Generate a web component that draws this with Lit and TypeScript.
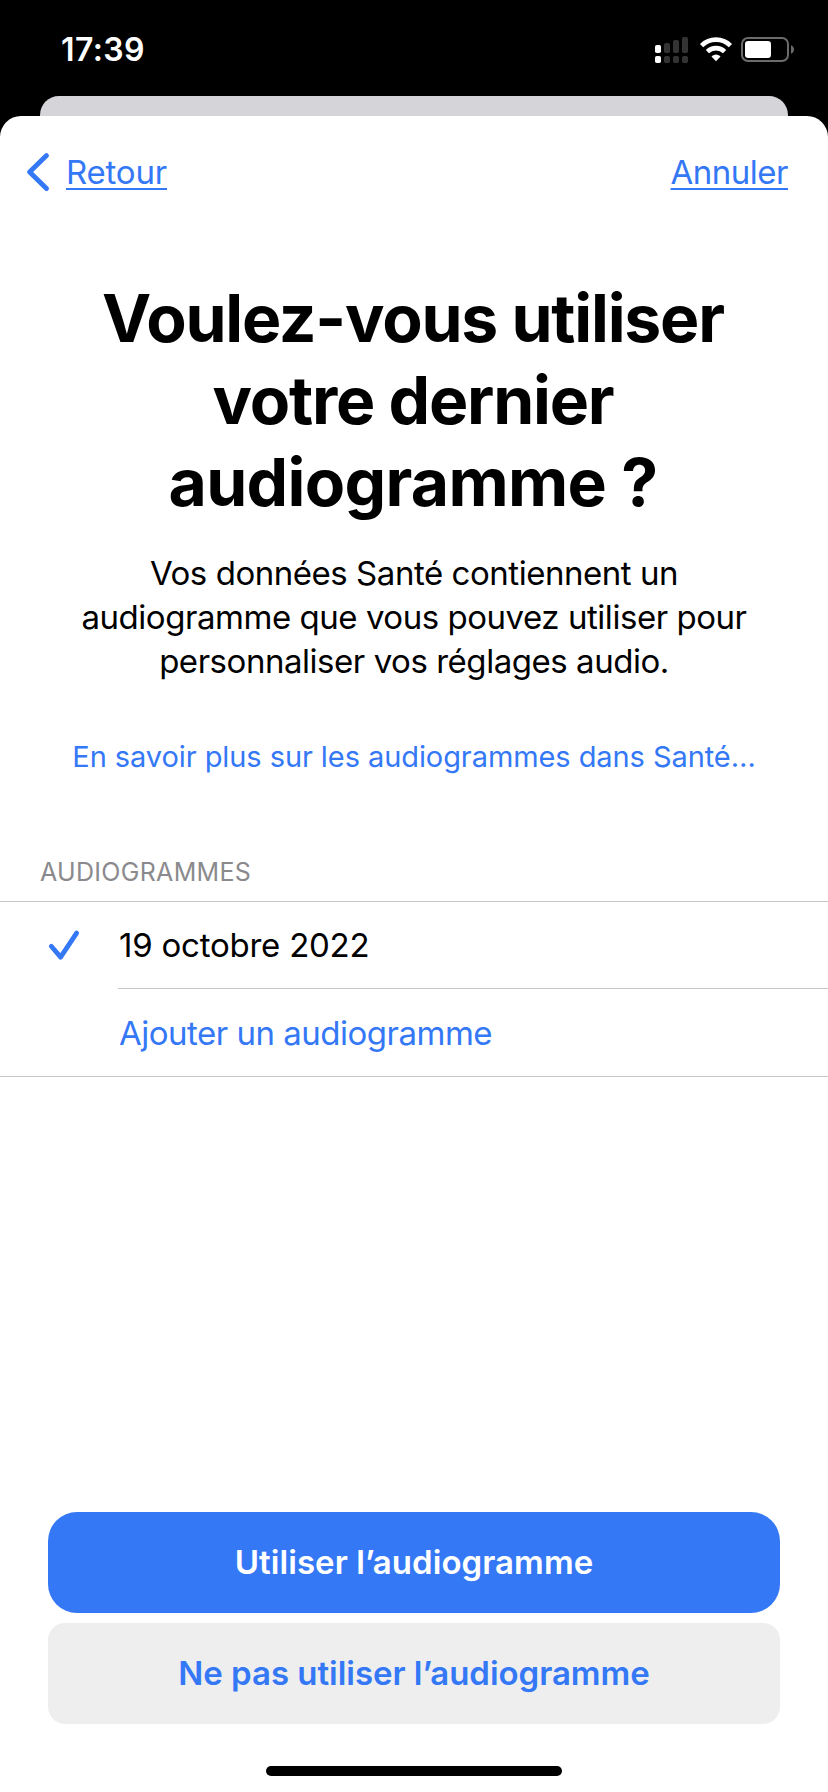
import { LitElement, html, css, svg } from "lit";
import { customElement } from "lit/decorators.js";

@customElement("status-bar")
class StatusBar extends LitElement {
  static styles = css`
    :host { display: flex; justify-content: space-between; align-items: flex-start; height: 96px; padding: 0 34px 0 61px; box-sizing: border-box; color: #fff; }
    .time { margin-top: 30px; font-size: 32px; font-weight: 600; line-height: 40px; letter-spacing: 0.38px; }
    .icons { display: block; margin-top: 35px; }
  `;
  render() {
    const tops = [10, 8, 5, 2];
    return html`
      <div class="time">17:39</div>
      <svg class="icons" width="142" height="30" viewBox="0 0 142 30">
        ${tops.map((y, i) => svg`
          <rect x=${3 + i * 9} y=${y} width="6" height=${18 - y} rx="1.8" fill=${i ? "#333" : "#fff"} />
          <rect x=${3 + i * 9} y="21" width="6" height="7" rx="1.8" fill=${i ? "#333" : "#fff"} />`)}
        <g fill="none" stroke="#fff" stroke-width="4.6">
          <path d="M49.6 10.6A20.4 20.4 0 0 1 78.4 10.6" />
          <path d="M55.4 16.6A12.4 12.4 0 0 1 72.6 16.6" />
        </g>
        <path fill="#fff" d="M64 26.2L59.7 21.8Q59.5 21.4 59.9 21.1Q64 18 68.1 21.1Q68.5 21.4 68.3 21.8Z" />
        <rect x="90" y="3" width="46" height="23" rx="6" fill="none" stroke="#6b6b6b" stroke-width="2" />
        <rect x="93" y="6" width="26" height="17" rx="3.2" fill="#fff" />
        <path d="M139 10.2Q142 11.6 142 14.5Q142 17.4 139 18.8Z" fill="#6b6b6b" />
      </svg>`;
  }
}

@customElement("audiogram-list")
class AudiogramList extends LitElement {
  static styles = css`
    :host { display: block; }
    .header { padding-left: 40px; font-size: 25px; line-height: 30px; letter-spacing: 0.3px; color: #8a8a8d; }
    .rows { margin-top: 14px; border-top: 1px solid #c6c6c8; border-bottom: 1px solid #c6c6c8; }
    .row { display: flex; font-size: 33px; }
    .mark { width: 118px; display: flex; align-items: center; padding: 0 0 2px 46px; box-sizing: border-box; }
    .label { flex: 1; display: flex; align-items: center; height: 87px; padding-left: 1px; box-sizing: border-box; }
    .date { border-bottom: 1px solid #c6c6c8; letter-spacing: -0.23px; }
    .add { color: #3478f6; letter-spacing: -0.5px; }
  `;
  render() {
    return html`
      <div class="header">AUDIOGRAMMES</div>
      <div class="rows">
        <div class="row">
          <div class="mark">
            <svg width="36" height="36" viewBox="0 0 36 36"><path d="M5.3 19.3L14.6 30.1L30.6 6.1" fill="none" stroke="#3478f6" stroke-width="4.8" stroke-linecap="round" stroke-linejoin="round" /></svg>
          </div>
          <div class="label date">19 octobre 2022</div>
        </div>
        <div class="row">
          <div class="mark"></div>
          <div class="label add">Ajouter un audiogramme</div>
        </div>
      </div>`;
  }
}

@customElement("app-root")
class AppRoot extends LitElement {
  static styles = css`
    :host { display: flex; flex-direction: column; width: 828px; height: 1792px; background: #000; font-family: Inter, "Liberation Sans", sans-serif; }
    .peek { height: 20px; margin: 0 40px; border-radius: 19px 19px 0 0; background: #d5d4d9; }
    .sheet { flex: 1; display: flex; flex-direction: column; background: #fff; border-radius: 21px 21px 0 0; }
    nav { display: flex; align-items: center; height: 40px; padding: 36px 40px 0 24px; font-size: 33px; line-height: 40px; color: #3478f6; }
    .chevron { display: block; margin-right: 14px; }
    .link { text-decoration: underline 2px; text-underline-offset: 4px; text-decoration-skip-ink: none; }
    .back { letter-spacing: -0.2px; }
    .cancel { margin-left: auto; letter-spacing: -0.5px; }
    .line { display: block; white-space: nowrap; }
    h1 { margin: 85px 0 0; padding-right: 2px; text-align: center; font-size: 66px; line-height: 82px; font-weight: 700; letter-spacing: -1.21px; }
    .last { letter-spacing: -0.68px; }
    .intro { margin: 28px 0 0; text-align: center; font-size: 33px; line-height: 44px; letter-spacing: -0.46px; }
    .more { margin-top: 54px; text-align: center; font-size: 29px; line-height: 40px; letter-spacing: -0.08px; color: #3478f6; }
    audiogram-list { margin-top: 80px; }
    .actions { margin-top: auto; padding: 0 48px; display: flex; flex-direction: column; gap: 10px; }
    button { height: 101px; border: 0; padding: 0 0 2px; font: 600 33px/40px Inter, "Liberation Sans", sans-serif; }
    .primary { border-radius: 29px; background: #3478f6; color: #fff; letter-spacing: 0.06px; }
    .secondary { border-radius: 17px; background: #eee; color: #3478f6; letter-spacing: -0.03px; }
    .home { width: 296px; height: 10px; margin: 42px auto 16px; border-radius: 5px; background: #000; }
  `;
  render() {
    return html`
      <status-bar></status-bar>
      <div class="peek"></div>
      <div class="sheet">
        <nav>
          <svg class="chevron" width="28" height="40" viewBox="0 0 28 40"><path d="M22.5 3.6L5.6 20L22.5 36.5" fill="none" stroke="#3478f6" stroke-width="4.9" stroke-linecap="round" stroke-linejoin="round" /></svg>
          <span class="link back">Retour</span>
          <span class="link cancel">Annuler</span>
        </nav>
        <h1>
          <span class="line">Voulez-vous utiliser</span>
          <span class="line">votre dernier</span>
          <span class="line last">audiogramme ?</span>
        </h1>
        <p class="intro">
          <span class="line">Vos données Santé contiennent un</span>
          <span class="line">audiogramme que vous pouvez utiliser pour</span>
          <span class="line">personnaliser vos réglages audio.</span>
        </p>
        <div class="more">En savoir plus sur les audiogrammes dans Santé…</div>
        <audiogram-list></audiogram-list>
        <div class="actions">
          <button class="primary">Utiliser l’audiogramme</button>
          <button class="secondary">Ne pas utiliser l’audiogramme</button>
        </div>
        <div class="home"></div>
      </div>`;
  }
}
